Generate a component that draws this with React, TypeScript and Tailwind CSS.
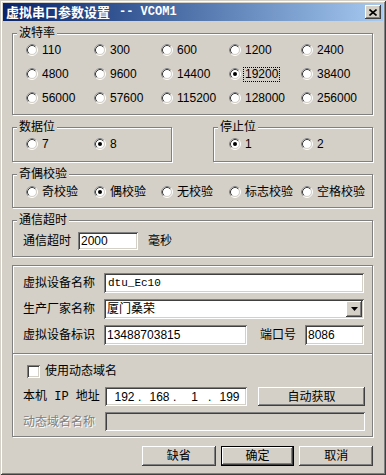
import React from "react";

const SUNKEN =
  "bg-white shadow-[inset_1px_1px_0_#808080,inset_-1px_-1px_0_#fff,inset_2px_2px_0_#404040,inset_-2px_-2px_0_#d4d0c8]";
const RAISED =
  "bg-[#d4d0c8] shadow-[inset_-1px_-1px_0_#404040,inset_1px_1px_0_#fff,inset_-2px_-2px_0_#808080,inset_2px_2px_0_#d4d0c8]";

function Radio({ checked }: { checked?: boolean }) {
  return (
    <svg width="12" height="12" viewBox="0 0 12 12" className="shrink-0">
      <circle cx="6" cy="6" r="5.5" fill="none" stroke="#fff" />
      <path d="M2.11 9.89 A5.5 5.5 0 0 1 9.89 2.11" fill="none" stroke="#808080" />
      <circle cx="6" cy="6" r="4.5" fill="#fff" stroke="#d4d0c8" />
      <path d="M2.82 9.18 A4.5 4.5 0 0 1 9.18 2.82" fill="none" stroke="#404040" />
      {checked && <circle cx="6" cy="6" r="2" fill="#000" />}
    </svg>
  );
}

function RadioItem({ label, checked, focus }: { label: string; checked?: boolean; focus?: boolean }) {
  return (
    <div className="flex items-center gap-[4px] h-[12px] whitespace-nowrap">
      <Radio checked={checked} />
      {focus ? (
        <span className="leading-[13px] border border-dotted border-black px-[1px] -ml-[2px]">{label}</span>
      ) : (
        <span className="leading-[12px]">{label}</span>
      )}
    </div>
  );
}

function Group({
  title,
  className,
  children,
}: {
  title?: string;
  className?: string;
  children?: React.ReactNode;
}) {
  return (
    <div
      className={
        "relative border border-[#808080] shadow-[inset_1px_1px_0_#fff,1px_1px_0_#fff] " + (className ?? "")
      }
    >
      {title && (
        <span className="absolute left-[4px] top-[-8px] bg-[#d4d0c8] px-[2px] leading-[14px]">{title}</span>
      )}
      {children}
    </div>
  );
}

const rates = [
  ["110", "300", "600", "1200", "2400"],
  ["4800", "9600", "14400", "19200", "38400"],
  ["56000", "57600", "115200", "128000", "256000"],
];

export default function App() {
  return (
    <div
      className={
        "w-[386px] h-[475px] bg-[#d4d0c8] p-[3px] text-[12px] text-black font-['Liberation_Sans','Noto_Sans_CJK_SC',sans-serif] shadow-[inset_1px_1px_0_#d4d0c8,inset_-1px_-1px_0_#404040,inset_2px_2px_0_#fff,inset_-2px_-2px_0_#808080]"
      }
    >
      {/* Title bar */}
      <div className="h-[18px] flex items-center justify-between pl-[3px] pr-[2px] bg-linear-to-r from-[#0a246a] to-[#a6caf0]">
        <div className="flex items-center text-white font-bold text-[13px] leading-[16px] whitespace-nowrap">
          <span className="font-['Noto_Sans_CJK_SC',sans-serif]">虚拟串口参数设置</span>
          <span className="ml-[9px] font-['Liberation_Mono',monospace] text-[12px]">-- VCOM1</span>
        </div>
        <div className={"w-[16px] h-[14px] flex items-center justify-center " + RAISED}>
          <svg width="8" height="7" viewBox="0 0 8 7">
            <path d="M0.5 0.5 L7.5 6.5 M7.5 0.5 L0.5 6.5" stroke="#000" strokeWidth="1.6" />
          </svg>
        </div>
      </div>

      <div className="pl-[9px] w-[370px]">
        {/* 波特率 */}
        <Group title="波特率" className="mt-[12px] w-[361px] h-[82px]">
          <div className="grid grid-cols-[68px_67px_68px_72px_1fr] gap-y-[12px] pl-[13px] pt-[10px]">
            {rates.flat().map((r) => (
              <RadioItem key={r} label={r} checked={r === "19200"} focus={r === "19200"} />
            ))}
          </div>
        </Group>

        {/* 数据位 / 停止位 */}
        <div className="mt-[12px] w-[361px] flex justify-between">
          <Group title="数据位" className="w-[160px] h-[35px]">
            <div className="grid grid-cols-[68px_1fr] pl-[13px] pt-[10px]">
              <RadioItem label="7" />
              <RadioItem label="8" checked />
            </div>
          </Group>
          <Group title="停止位" className="w-[160px] h-[35px]">
            <div className="grid grid-cols-[72px_1fr] pl-[15px] pt-[10px]">
              <RadioItem label="1" checked />
              <RadioItem label="2" />
            </div>
          </Group>
        </div>

        {/* 奇偶校验 */}
        <Group title="奇偶校验" className="mt-[12px] w-[361px] h-[34px]">
          <div className="grid grid-cols-[68px_67px_68px_72px_1fr] pl-[13px] pt-[11px]">
            <RadioItem label="奇校验" />
            <RadioItem label="偶校验" checked />
            <RadioItem label="无校验" />
            <RadioItem label="标志校验" />
            <RadioItem label="空格校验" />
          </div>
        </Group>

        {/* 通信超时 */}
        <Group title="通信超时" className="mt-[12px] w-[361px] h-[37px]">
          <div className="flex items-center pl-[10px] pt-[11px]">
            <span className="w-[55px] leading-[18px]">通信超时</span>
            <div className={"w-[60px] h-[18px] pl-[3px] flex items-center leading-[14px] " + SUNKEN}>2000</div>
            <span className="ml-[10px] leading-[18px]">毫秒</span>
          </div>
        </Group>

        {/* Device / dynamic domain */}
        <Group className="mt-[8px] w-[361px] h-[172px]">
          <div className="pl-[10px] pr-[8px] pt-[7px] flex flex-col gap-[6px]">
            <div className="flex items-center h-[20px]">
              <span className="w-[81px] shrink-0">虚拟设备名称</span>
              <div className={"flex-1 h-[20px] pl-[4px] flex items-center font-['Liberation_Mono',monospace] text-[11px] " + SUNKEN}>
                dtu_Ec10
              </div>
            </div>
            <div className="flex items-center h-[20px]">
              <span className="w-[81px] shrink-0">生产厂家名称</span>
              <div className={"flex-1 h-[20px] pl-[3px] pr-[2px] flex items-center justify-between " + SUNKEN}>
                <span className="leading-[14px]">厦门桑荣</span>
                <div className={"w-[16px] h-[16px] flex items-center justify-center " + RAISED}>
                  <svg width="7" height="4" viewBox="0 0 7 4">
                    <path d="M0 0 H7 L3.5 4 Z" fill="#000" />
                  </svg>
                </div>
              </div>
            </div>
            <div className="flex items-center h-[20px]">
              <span className="w-[81px] shrink-0">虚拟设备标识</span>
              <div className={"w-[143px] h-[20px] pl-[3px] flex items-center " + SUNKEN}>13488703815</div>
              <span className="ml-[13px] w-[45px]">端口号</span>
              <div className={"flex-1 h-[20px] pl-[3px] flex items-center " + SUNKEN}>8086</div>
            </div>
          </div>

          {/* separator */}
          <div className="mt-[8px] h-[2px] border-t border-t-[#808080] border-b border-b-white" />

          <div className="pl-[10px] pr-[7px] flex flex-col">
            <div className="flex items-center mt-[10px] pl-[4px] h-[13px]">
              <div className={"w-[13px] h-[13px] " + SUNKEN} />
              <span className="ml-[5px] leading-[13px]">使用动态域名</span>
            </div>
            <div className="flex items-center mt-[9px] h-[19px]">
              <span className="w-[82px] shrink-0 whitespace-pre font-['Liberation_Mono','Noto_Sans_CJK_SC',monospace] text-[12px]">
                本机 IP 地址
              </span>
              <div className={"w-[142px] h-[19px] flex items-center pl-[6px] " + SUNKEN}>
                <span className="w-[27px] text-center">192</span>
                <span className="w-[8px]">.</span>
                <span className="w-[27px] text-center">168</span>
                <span className="w-[8px]">.</span>
                <span className="w-[27px] text-center">1</span>
                <span className="w-[8px]">.</span>
                <span className="w-[27px] text-center">199</span>
              </div>
              <div className={"ml-[11px] flex-1 h-[19px] flex items-center justify-center " + RAISED}>自动获取</div>
            </div>
            <div className="flex items-center mt-[6px] h-[19px]">
              <span className="w-[82px] shrink-0 text-[#808080] [text-shadow:1px_1px_0_#fff]">动态域名名称</span>
              <div className="flex-1 h-[19px] bg-[#d4d0c8] shadow-[inset_1px_1px_0_#808080,inset_-1px_-1px_0_#fff,inset_2px_2px_0_#404040,inset_-2px_-2px_0_#d4d0c8]" />
            </div>
          </div>
        </Group>

        {/* Buttons */}
        <div className="mt-[9px] pl-[130px] flex gap-[5px]">
          <div className={"w-[74px] h-[20px] flex items-center justify-center " + RAISED}>缺省</div>
          <div className="w-[74px] h-[20px] border border-black">
            <div className={"w-full h-full flex items-center justify-center " + RAISED}>确定</div>
          </div>
          <div className={"w-[74px] h-[20px] flex items-center justify-center " + RAISED}>取消</div>
        </div>
      </div>
    </div>
  );
}
